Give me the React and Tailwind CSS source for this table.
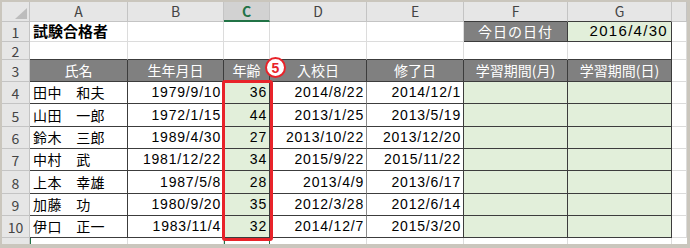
import React from 'react'

const DARK = 'border-[#3c3c3c]'

const rows = [
  ['4', '田中　和夫', '1979/9/10', '36', '2014/8/22', '2014/12/1'],
  ['5', '山田　一郎', '1972/1/15', '44', '2013/1/25', '2013/5/19'],
  ['6', '鈴木　三郎', '1989/4/30', '27', '2013/10/22', '2013/12/20'],
  ['7', '中村　武', '1981/12/22', '34', '2015/9/22', '2015/11/22'],
  ['8', '上本　幸雄', '1987/5/8', '28', '2013/4/9', '2013/6/17'],
  ['9', '加藤　功', '1980/9/20', '35', '2012/3/28', '2012/6/14'],
  ['10', '伊口　正一', '1983/11/4', '32', '2014/12/7', '2015/3/20'],
]

function RowHead({ children }) {
  return (
    <div className="bg-[#e6e6e6] border-r border-b border-[#c4c4c4] flex items-center justify-center text-[14px] text-[#444] pt-[2px]">
      {children}
    </div>
  )
}

function ColHead({ children, className = 'border-b-[#c4c4c4]' }) {
  return (
    <div className={`bg-[#e6e6e6] border-r border-b border-r-[#c4c4c4] flex items-center justify-center text-[14px] text-[#444] ${className}`}>
      {children}
    </div>
  )
}

function Grid({ className = '' }) {
  return <div className={`border-r border-b border-[#dcdcdc] ${className}`} />
}

function Head({ children, className = '' }) {
  return (
    <div className={`bg-[#808080] text-white border-r border-b ${DARK} flex items-center justify-center text-[14px] ${className}`}>
      {children}
    </div>
  )
}

function Num({ children, className = '' }) {
  return (
    <div className={`border-r border-b ${DARK} flex items-center justify-end pr-[2px] text-[14px] tracking-[0.8px] font-['Liberation_Sans','Noto_Sans_CJK_JP',sans-serif] ${className}`}>
      {children}
    </div>
  )
}

export default function App() {
  return (
    <div className="w-[690px] h-[248px] bg-[#cac6bd] pt-[2px] pl-[2px] pr-[3px] pb-[4px] font-['Noto_Sans_CJK_JP',sans-serif] text-black">
      <div className="relative w-[685px] h-[242px] bg-white overflow-hidden grid grid-cols-[28px_98px_96px_46px_97px_97px_104px_104px_15px] grid-rows-[20px_20px_18px_22px_22px_23px_22px_22px_23px_22px_22px_6px]">
        {/* column headers */}
        <div className="bg-[#e6e6e6] border-r border-b border-[#c4c4c4] flex items-end justify-end pr-[2px] pb-[2px]">
          <svg width="12" height="11" viewBox="0 0 12 11">
            <polygon points="12,0 12,11 0,11" fill="#bdbdbd" />
          </svg>
        </div>
        <ColHead>A</ColHead>
        <ColHead>B</ColHead>
        <div className="bg-[#d2d2d2] border-r border-[#c4c4c4] border-b-2 border-b-[#217346] flex items-center justify-center text-[14px] font-bold text-[#217346]">
          C
        </div>
        <ColHead>D</ColHead>
        <ColHead>E</ColHead>
        <ColHead className="border-b-[#3c3c3c]">F</ColHead>
        <ColHead className="border-b-[#3c3c3c]">G</ColHead>
        <ColHead />

        {/* row 1 */}
        <RowHead>1</RowHead>
        <div className="border-r border-b border-[#dcdcdc] flex items-center pl-[3px] text-[15px] font-bold whitespace-nowrap">
          試験合格者
        </div>
        <Grid />
        <Grid />
        <Grid />
        <div className={`border-b border-[#dcdcdc] border-r ${DARK}`} />
        <div className={`bg-[#808080] text-white border-r border-b ${DARK} flex items-center justify-center text-[14px] tracking-[1px]`}>
          今日の日付
        </div>
        <div className={`bg-[#e2efda] border-r border-b ${DARK} flex items-center justify-end pr-[3px] text-[15px] tracking-[1.3px] font-['Liberation_Sans',sans-serif]`}>
          2016/4/30
        </div>
        <Grid />

        {/* row 2 */}
        <RowHead>2</RowHead>
        <div className={`border-r border-r-[#dcdcdc] border-b ${DARK}`} />
        <div className={`border-r border-r-[#dcdcdc] border-b ${DARK}`} />
        <div className={`border-r border-r-[#dcdcdc] border-b ${DARK}`} />
        <div className={`border-r border-r-[#dcdcdc] border-b ${DARK}`} />
        <div className={`border-r border-r-[#dcdcdc] border-b ${DARK}`} />
        <div className={`border-r border-r-[#dcdcdc] border-b ${DARK}`} />
        <div className={`border-r border-b ${DARK}`} />
        <Grid />

        {/* row 3 */}
        <RowHead>3</RowHead>
        <Head>氏名</Head>
        <Head>生年月日</Head>
        <Head>年齢</Head>
        <Head>入校日</Head>
        <Head>修了日</Head>
        <Head>学習期間(月)</Head>
        <Head>学習期間(日)</Head>
        <Grid />

        {/* data */}
        {rows.map(([n, name, birth, age, start, end]) => (
          <React.Fragment key={n}>
            <RowHead>{n}</RowHead>
            <div className={`border-r border-b ${DARK} flex items-center pl-[3px] text-[14px] tracking-[0.4px] whitespace-nowrap`}>
              {name}
            </div>
            <Num>{birth}</Num>
            <Num className="bg-[#e2efda]">{age}</Num>
            <Num className="border-r-[#8a8a8a]">{start}</Num>
            <Num>{end}</Num>
            <div className={`bg-[#e2efda] border-r border-b ${DARK}`} />
            <div className={`bg-[#e2efda] border-r border-b ${DARK}`} />
            <Grid />
          </React.Fragment>
        ))}

        {/* row 11 (partial) */}
        <div className="bg-[#e6e6e6] border-r border-[#c4c4c4]" />
        <div className="border-l border-l-[#217346] border-r border-r-[#dcdcdc]" />
        <Grid className="border-b-0" />
        <div className="border-l border-r border-[#217346]" />
        <Grid className="border-b-0" />
        <Grid className="border-b-0" />
        <Grid className="border-b-0" />
        <Grid className="border-b-0" />
        <div />

        {/* red highlight around age column */}
        <div className="absolute left-[220px] top-[78px] w-[51px] h-[161px] border-[3px] border-[#e8232a] rounded-[3px] pointer-events-none" />

        {/* circled number */}
        <div className="absolute left-[263px] top-[55px] w-[21px] h-[21px] rounded-full border-2 border-[#e8232a] bg-white flex items-center justify-center text-[#e8232a] text-[14px] font-bold leading-none font-['Liberation_Sans',sans-serif]">
          5
        </div>
      </div>
    </div>
  )
}
